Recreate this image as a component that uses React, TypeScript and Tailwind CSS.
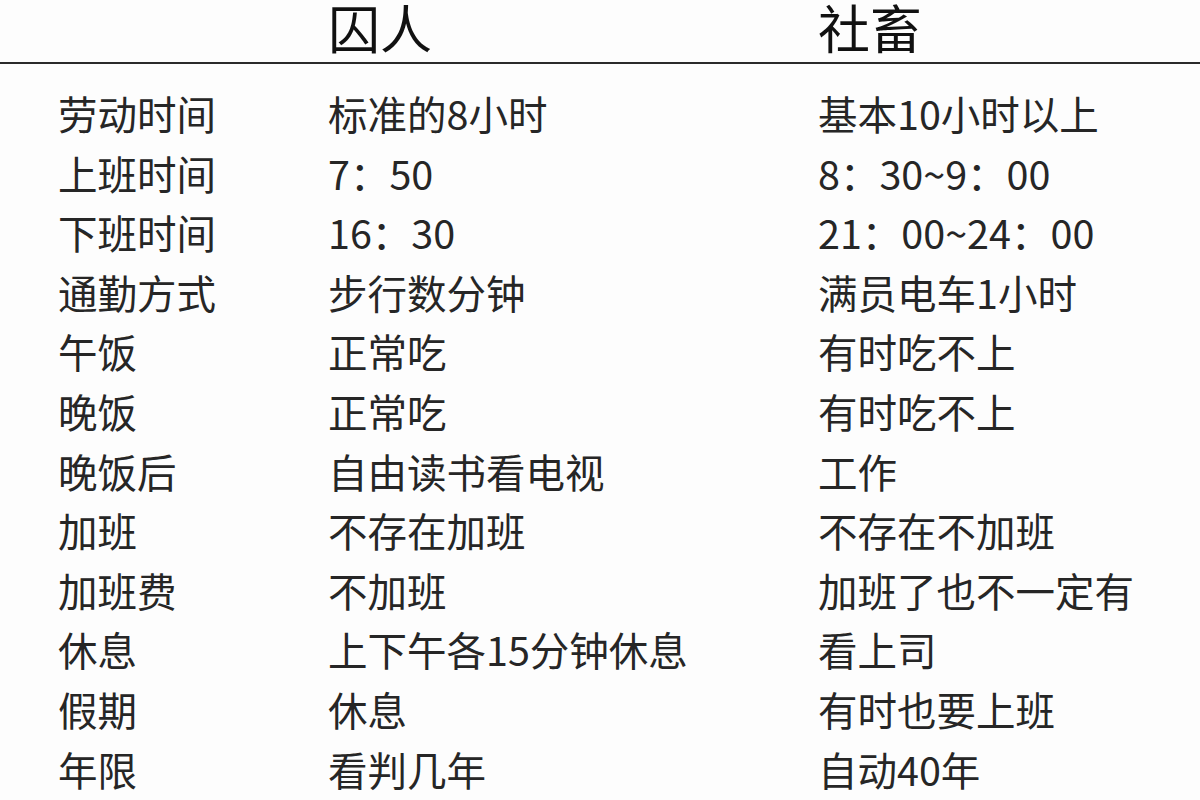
import React from "react";

const rows: [string, string, string][] = [
  ["劳动时间", "标准的8小时", "基本10小时以上"],
  ["上班时间", "7：50", "8：30~9：00"],
  ["下班时间", "16：30", "21：00~24：00"],
  ["通勤方式", "步行数分钟", "满员电车1小时"],
  ["午饭", "正常吃", "有时吃不上"],
  ["晚饭", "正常吃", "有时吃不上"],
  ["晚饭后", "自由读书看电视", "工作"],
  ["加班", "不存在加班", "不存在不加班"],
  ["加班费", "不加班", "加班了也不一定有"],
  ["休息", "上下午各15分钟休息", "看上司"],
  ["假期", "休息", "有时也要上班"],
  ["年限", "看判几年", "自动40年"],
];

export default function App() {
  return (
    <div
      className="w-[1200px] h-[800px] overflow-hidden bg-[#fdfdfd] text-[#262626]"
      style={{ fontFamily: '"Noto Sans CJK SC", "Noto Sans", sans-serif' }}
    >
      <div className="h-[62px] flex text-[52px] leading-[54px] text-[#111111] font-normal">
        <div className="w-[328px] shrink-0" />
        <div className="w-[490px] shrink-0">囚人</div>
        <div>社畜</div>
      </div>
      <div className="h-[2px] bg-[#2a2a2a]" />
      <div className="pt-[19px] flex flex-col text-[39.5px] leading-[59.6px]">
        {rows.map((r, i) => (
          <div key={i} className="flex whitespace-nowrap">
            <div className="w-[328px] shrink-0 pl-[58px]">{r[0]}</div>
            <div className="w-[490px] shrink-0">{r[1]}</div>
            <div>{r[2]}</div>
          </div>
        ))}
      </div>
    </div>
  );
}
